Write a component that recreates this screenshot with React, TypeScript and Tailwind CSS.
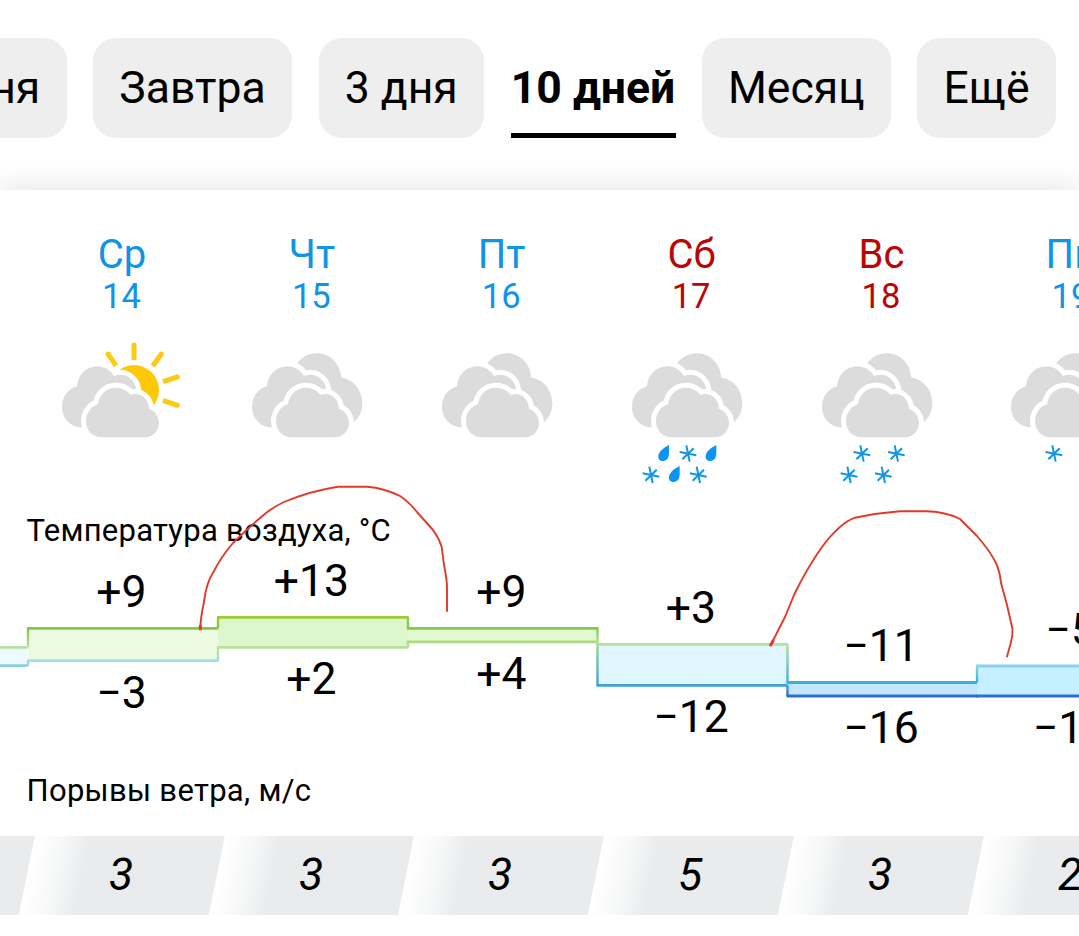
import React from 'react';

type Precipitation = { kind: 'snow' | 'rain'; x: number; y: number };

type Day = {
  name: string;
  date: number;
  weekend?: boolean;
  sunny?: boolean;
  precipitation: Precipitation[];
  wind: number;
};

const tabs = [
  { label: 'Сегодня', width: 'w-[220px] pr-[4px]' },
  { label: 'Завтра', width: 'w-[199px]' },
  { label: '3 дня', width: 'w-[165.5px]' },
  { label: '10 дней', width: 'w-[165px]', active: true },
  { label: 'Месяц', width: 'w-[188.5px]' },
  { label: 'Ещё', width: 'w-[139px]' },
];

const days: Day[] = [
  { name: 'Ср', date: 14, sunny: true, precipitation: [], wind: 3 },
  { name: 'Чт', date: 15, precipitation: [], wind: 3 },
  { name: 'Пт', date: 16, precipitation: [], wind: 3 },
  {
    name: 'Сб',
    date: 17,
    weekend: true,
    precipitation: [
      { kind: 'rain', x: 160, y: 341 },
      { kind: 'snow', x: 234, y: 341 },
      { kind: 'rain', x: 302, y: 341 },
      { kind: 'snow', x: 123, y: 405 },
      { kind: 'rain', x: 192, y: 404 },
      { kind: 'snow', x: 265, y: 405 },
    ],
    wind: 5,
  },
  {
    name: 'Вс',
    date: 18,
    weekend: true,
    precipitation: [
      { kind: 'snow', x: 186, y: 341 },
      { kind: 'snow', x: 289, y: 341 },
      { kind: 'snow', x: 147, y: 405 },
      { kind: 'snow', x: 250, y: 405 },
    ],
    wind: 3,
  },
  { name: 'Пн', date: 19, precipitation: [{ kind: 'snow', x: 195, y: 341 }], wind: 2 },
];

// y values are relative to the top of the chart
const ranges = [
  { x: -163, top: 99.3, bottom: 117.7, fill: '#eafaff', high: '#b6dfa0', low: '#8ccfe0' },
  { x: 28, top: 80.3, bottom: 112.7, fill: '#ebfae0', high: '#85c742', low: '#a3dcec', max: '+9', maxY: 59, min: '−3', minY: 160 },
  { x: 218, top: 69.3, bottom: 99.3, fill: '#ddf6cb', high: '#9acb38', low: '#b8e29c', max: '+13', maxY: 48, min: '+2', minY: 146 },
  { x: 408, top: 80.3, bottom: 93.8, fill: '#e0f9cf', high: '#84c84e', low: '#a9db85', max: '+9', maxY: 59, min: '+4', minY: 141 },
  { x: 597.5, top: 96.3, bottom: 137.3, fill: '#dff6fe', high: '#b6e19e', low: '#3fa1e0', max: '+3', maxY: 75, min: '−12', minY: 184 },
  { x: 787.5, top: 134.5, bottom: 148, fill: '#c4e6fd', high: '#3eaedf', low: '#2673cb', max: '−11', maxY: 113, min: '−16', minY: 194.5 },
  { x: 977, top: 118, bottom: 148, fill: '#c5f0ff', high: '#8ad1e6', low: '#2673cb', max: '−5', maxY: 97, min: '−12', minY: 194.5 },
];

const rays = [
  [204, 42, 228, 77],
  [282, 15, 282, 60],
  [364, 42, 338, 78],
  [412, 111, 369, 125],
  [412, 196, 369, 181],
];

const WeatherIcon: React.FC<{ day: Day }> = ({ day }) => (
  <svg viewBox="0 0 480 450" className="mt-[24px] ml-[13px] h-[150px] w-[160px] self-start">
    {day.sunny ? (
      <g>
        <circle cx="282" cy="150" r="75" fill="#fdc906" />
        {rays.map(([x1, y1, x2, y2]) => (
          <g key={`${x1}-${y1}`}>
            <line x1={x1} y1={y1} x2={x2} y2={y2} stroke="#fbcb14" strokeWidth="15" />
            <circle cx={x1} cy={y1} r="7.5" fill="#fbcb14" />
          </g>
        ))}
      </g>
    ) : (
      <path
        d="M202 69C216 51 236 40 260 40C300 40 331 71 334 113C370 117 397 150 397 190C397 212 388 232 373 246L250 250Z"
        fill="#dcdcdc"
      />
    )}
    <path
      d="M127 262C92 262 66 235 66 200C66 170 85 146 111 139C113 105 139 79 172 79C193 79 211 90 222 108C255 96 285 117 289 150L280 230Z"
      fill="#dcdcdc"
      stroke="#fff"
      strokeWidth="30"
      paintOrder="stroke"
    />
    <path
      d="M184 292C158 292 138 271 138 244C138 219 153 199 174 193C178 164 199 143 227 143C246 143 262 152 272 165C298 155 326 174 327 206C345 212 357 229 357 249C357 273 338 292 314 292Z"
      fill="#dcdcdc"
      stroke="#fff"
      strokeWidth="30"
      paintOrder="stroke"
    />
    {day.precipitation.map((p) => (
      <g key={`${p.x}-${p.y}`} transform={`translate(${p.x} ${p.y})`}>
        {p.kind === 'snow' ? (
          <path d="M-5-25L5 24M-25-5L25 5M-17 17L17-16" stroke="#1294e8" strokeWidth="6" fill="none" />
        ) : (
          <path d="M17-26C3-19-14-7-15 7C-16 16-10 22-1 22C11 22 17 11 17-2Z" fill="#0895f5" />
        )}
      </g>
    ))}
  </svg>
);

const TemperatureChart: React.FC = () => (
  <svg viewBox="0 0 1079 224" className="-mt-px block h-[224px] w-[1079px]">
    <defs>
      {ranges.slice(1).map((r, i) => (
        <React.Fragment key={r.x}>
          <linearGradient id={`high${i}`} gradientUnits="userSpaceOnUse" x1="0" x2="0" y1={ranges[i].top} y2={r.top}>
            <stop stopColor={ranges[i].high} />
            <stop offset="1" stopColor={r.high} />
          </linearGradient>
          <linearGradient id={`low${i}`} gradientUnits="userSpaceOnUse" x1="0" x2="0" y1={ranges[i].bottom} y2={r.bottom}>
            <stop stopColor={ranges[i].low} />
            <stop offset="1" stopColor={r.low} />
          </linearGradient>
        </React.Fragment>
      ))}
    </defs>
    {ranges.map((r) => (
      <g key={r.x}>
        <rect x={r.x} y={r.top} width="190" height={r.bottom - r.top} fill={r.fill} />
        <path d={`M${r.x - 1} ${r.bottom}h191.5`} stroke={r.low} strokeWidth="2.8" />
        <path d={`M${r.x - 1} ${r.top}h191.5`} stroke={r.high} strokeWidth="2.8" />
      </g>
    ))}
    {ranges.slice(1).map((r, i) => (
      <g key={r.x} strokeWidth="2.4">
        <path d={`M${r.x} ${ranges[i].bottom}L${r.x + 0.01} ${r.bottom}`} stroke={`url(#low${i})`} />
        <path d={`M${r.x} ${ranges[i].top}L${r.x + 0.01} ${r.top}`} stroke={`url(#high${i})`} />
      </g>
    ))}
    <g textAnchor="middle" fontSize="44.5">
      {ranges.slice(1).map((r) => (
        <g key={r.x}>
          <text x={r.x + 93.5} y={r.maxY}>{r.max}</text>
          <text x={r.x + 93.5} y={r.minY}>{r.min}</text>
        </g>
      ))}
    </g>
  </svg>
);

const App: React.FC = () => {
  return (
    <div className="relative h-[936px] w-[1079px] overflow-hidden bg-white font-['Roboto',sans-serif] text-black">
      <nav className="-ml-[153.5px] flex h-[190px] items-start gap-[26.5px] pt-[38px]">
        {tabs.map((tab) => (
          <div
            key={tab.label}
            className={`flex h-[100px] shrink-0 items-center justify-center whitespace-nowrap text-[44.5px] ${tab.width} ${
              tab.active ? 'border-b-[5px] border-black pt-[6px] font-bold' : 'rounded-[23px] bg-[#eeeeee] pt-px'
            }`}
          >
            {tab.label}
          </div>
        ))}
      </nav>

      <main className="h-[746px] bg-white pt-[43px] shadow-[0_0_32px_rgba(0,0,0,0.13)]">
        <div className="flex pl-[27px]">
          {days.map((day) => (
            <div
              key={day.date}
              className={`flex w-[189.9px] shrink-0 flex-col items-center ${day.weekend ? 'text-[#bb0505]' : 'text-[#0f94e6]'}`}
            >
              <div className="text-[40px] leading-[44px]">{day.name}</div>
              <div className="-mt-px pr-px text-[34.5px] leading-[40px]">{day.date}</div>
              <WeatherIcon day={day} />
            </div>
          ))}
        </div>

        <h2 className="mt-[23px] pl-[26.5px] text-[31px] leading-[36px] tracking-[0.25px]">Температура воздуха, °C</h2>
        <TemperatureChart />
        <h2 className="mt-px pl-[26.5px] text-[31px] leading-[36px] tracking-[0.3px]">Порывы ветра, м/с</h2>

        <div className="mt-[27px] -ml-[163px] flex h-[79px]">
          <div className="w-[189.8px] shrink-0 -skew-x-[11.5deg] bg-[#eaebed]" />
          {days.map((day) => (
            <div
              key={day.date}
              className="flex w-[189.8px] shrink-0 -skew-x-[11.5deg] items-center justify-center bg-linear-to-r from-white via-[#f7f8f8] via-[15%] to-[#eaebed] to-[29%] pr-px"
            >
              <span className="skew-x-[11.5deg] text-[44.5px] italic">{day.wind}</span>
            </div>
          ))}
        </div>
      </main>

      {/* hand-drawn marks over the chart */}
      <svg viewBox="0 0 1079 936" className="absolute inset-0 h-full w-full" fill="none" stroke="#e03a2a" strokeWidth="1.9" strokeLinejoin="round" strokeLinecap="round">
        <path d="M200.3 629Q200.5 618 204 602Q206 583 214 571Q221 557 233 543Q246 530 260 518Q271 508 284 502Q310 491 338 486.7H367Q384 488 400 496Q408 501 417 512L433 530Q439 538 441.7 547L444 565Q447 580 447 587V611" />
        <path d="M770.7 645L785 617L794 595Q807 568 822 547Q840 523 855 517.7Q877 513 900 511.3H925Q943 511 960 519L977 536Q990 551 996 563Q1000 572 1001 583L1007 605L1012.5 629Q1013 636 1010.5 644L1007 656.5" />
        <path d="M200.3 626V629M770.7 645L773 641" strokeWidth="3" />
      </svg>
    </div>
  );
};

export default App;
